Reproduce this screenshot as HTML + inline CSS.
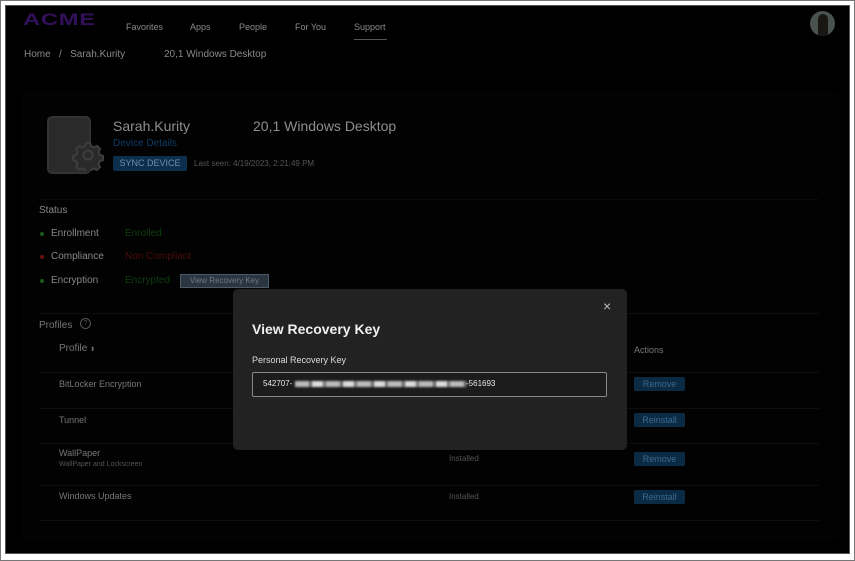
<!DOCTYPE html>
<html><head><meta charset="utf-8"><style>
*{margin:0;padding:0;box-sizing:border-box}
body{width:855px;height:561px;background:#fff;font-family:"Liberation Sans",sans-serif;position:relative;overflow:hidden}
.frame{position:absolute;left:0;top:0;width:855px;height:561px;border:1px solid #777}
.inner{position:absolute;left:5px;top:5px;width:845px;height:549px;background:#000;border:1px solid #555;overflow:hidden}
.a{position:absolute;white-space:nowrap}
.nav{font-size:9px;color:#8a8a8a;top:16px}
.card{position:absolute;left:16px;top:84px;width:818px;height:452px;background:#020202;border-radius:8px}
.lbl{font-size:10px;color:#888}
.dot{position:absolute;width:4px;height:4px;border-radius:50%}
.line{position:absolute;left:33px;width:780px;height:1px;background:#0e0e0e}
.btn{position:absolute;background:#0b2a44;color:#3b6a8e;font-size:9px;text-align:center;border-radius:2px;height:14px;line-height:14px;width:51px;left:628px}
.row{font-size:9px;color:#777}
</style></head><body>
<div class="frame"></div>
<div class="inner">
 <div class="a" style="left:17px;top:4px;font-size:17px;font-weight:bold;color:#32105a;letter-spacing:0.5px;transform:scaleX(1.4);transform-origin:left">ACME</div>
 <div class="a nav" style="left:120px">Favorites</div>
 <div class="a nav" style="left:184px">Apps</div>
 <div class="a nav" style="left:233px">People</div>
 <div class="a nav" style="left:289px">For You</div>
 <div class="a nav" style="left:348px">Support</div>
 <div class="a" style="left:348px;top:33px;width:33px;height:1px;background:#555"></div>
 <div class="a" style="left:804px;top:5px;width:25px;height:25px;border-radius:50%;background:#4a5250;overflow:hidden"><div style="position:absolute;left:8px;top:3px;width:10px;height:22px;background:#1a1614;border-radius:5px 5px 0 0"></div></div>
 <div class="a" style="left:18px;top:43px;font-size:10px;color:#8a8a8a">Home&nbsp;&nbsp;&nbsp;/&nbsp;&nbsp;&nbsp;Sarah.Kurity</div>
 <div class="a" style="left:158px;top:43px;font-size:10px;color:#8a8a8a">20,1 Windows Desktop</div>
 <div class="card"></div>
 <div class="a" style="left:41px;top:110px;width:44px;height:58px;border:2px solid #333;border-radius:5px;background:#2a2a2a"></div>
 <svg class="a" style="left:66px;top:133px" width="32" height="32" viewBox="0 0 32 32"><path d="M14 4h4l1 3 3 1.5 3-1.5 3 3-1.5 3 1.5 3 3 1v4l-3 1-1.5 3 1.5 3-3 3-3-1.5-3 1.5-1 3h-4l-1-3-3-1.5-3 1.5-3-3 1.5-3-1.5-3-3-1v-4l3-1 1.5-3-1.5-3 3-3 3 1.5 3-1.5z" fill="#2a2a2a" stroke="#3c3c3c" stroke-width="2.2"/><circle cx="16" cy="16" r="4.5" fill="none" stroke="#3c3c3c" stroke-width="2.2"/></svg>
 <div class="a" style="left:107px;top:112px;font-size:14px;color:#8e8e8e">Sarah.Kurity</div>
 <div class="a" style="left:247px;top:112px;font-size:14px;color:#8e8e8e">20,1 Windows Desktop</div>
 <div class="a" style="left:107px;top:132px;font-size:10px;color:#0f3a66">Device Details</div>
 <div class="a" style="left:107px;top:150px;width:74px;height:15px;background:#0d2f4e;color:#6f8ea8;font-size:9px;text-align:center;line-height:15px;border-radius:2px">SYNC DEVICE</div>
 <div class="a" style="left:188px;top:153px;font-size:8px;color:#555">Last seen: 4/19/2023, 2:21:49 PM</div>
 <div class="line" style="top:193px;background:#0a0a0a"></div>
 <div class="a" style="left:33px;top:199px;font-size:10px;color:#888">Status</div>
 <div class="dot" style="left:34px;top:226px;background:#1a5a1a"></div>
 <div class="a lbl" style="left:45px;top:222px">Enrollment</div>
 <div class="a" style="left:119px;top:222px;font-size:10px;color:#0f3d0f">Enrolled</div>
 <div class="dot" style="left:34px;top:249px;background:#6a1010"></div>
 <div class="a lbl" style="left:45px;top:245px">Compliance</div>
 <div class="a" style="left:119px;top:245px;font-size:10px;color:#4a0c0c">Non Compliant</div>
 <div class="dot" style="left:34px;top:273px;background:#1a5a1a"></div>
 <div class="a lbl" style="left:45px;top:269px">Encryption</div>
 <div class="a" style="left:119px;top:269px;font-size:10px;color:#0f3d0f">Encrypted</div>
 <div class="a" style="left:174px;top:268px;width:89px;height:14px;background:#2a3540;border:1px solid #4a5a68;color:#6a7886;font-size:8px;text-align:center;line-height:12px">View Recovery Key</div>
 <div class="line" style="top:307px"></div>
 <div class="a" style="left:33px;top:314px;font-size:10px;color:#777">Profiles</div>
 <div class="a" style="left:74px;top:312px;width:11px;height:11px;border:1px solid #555;border-radius:50%;font-size:7px;color:#555;text-align:center;line-height:10px">?</div>
 <div class="a" style="left:53px;top:337px;font-size:10px;color:#777">Profile <span style="font-size:6px">⬍</span></div>
 <div class="a" style="left:628px;top:339px;font-size:9px;color:#777">Actions</div>
 <div class="line" style="top:366px"></div>
 <div class="a row" style="left:53px;top:373px">BitLocker Encryption</div>
 <div class="btn" style="top:371px">Remove</div>
 <div class="line" style="top:402px"></div>
 <div class="a row" style="left:53px;top:409px">Tunnel</div>
 <div class="btn" style="top:407px">Reinstall</div>
 <div class="line" style="top:437px"></div>
 <div class="a row" style="left:53px;top:442px">WallPaper</div>
 <div class="a" style="left:53px;top:455px;font-size:7px;color:#555">WallPaper and Lockscreen</div>
 <div class="a" style="left:443px;top:448px;font-size:8px;color:#555">Installed</div>
 <div class="btn" style="top:446px">Remove</div>
 <div class="line" style="top:479px"></div>
 <div class="a row" style="left:53px;top:485px">Windows Updates</div>
 <div class="a" style="left:443px;top:486px;font-size:8px;color:#555">Installed</div>
 <div class="btn" style="top:484px">Reinstall</div>
 <div class="line" style="top:514px"></div>
 <!-- modal -->
 <div class="a" style="left:227px;top:283px;width:394px;height:161px;background:#222;border-radius:5px"></div>
 <div class="a" style="left:597px;top:292px;font-size:14px;color:#bbb">×</div>
 <div class="a" style="left:246px;top:315px;font-size:14px;font-weight:bold;color:#f0f0f0">View Recovery Key</div>
 <div class="a" style="left:246px;top:349px;font-size:9px;color:#ddd">Personal Recovery Key</div>
 <div class="a" style="left:246px;top:366px;width:355px;height:25px;border:1px solid #888;border-radius:2px;background:#1c1c1c"></div>
 <div class="a" style="left:257px;top:373px;font-size:8px;color:#e8e8e8">542707-</div>
 <div class="a" style="left:289px;top:375px;width:172px;height:6px;filter:blur(1px);background:repeating-linear-gradient(90deg,#bbb 0 14px,#666 14px 17px,#ddd 17px 28px,#777 28px 31px)"></div>
 <div class="a" style="left:460px;top:373px;font-size:8px;color:#e8e8e8">-561693</div>
</div>
</body></html>
